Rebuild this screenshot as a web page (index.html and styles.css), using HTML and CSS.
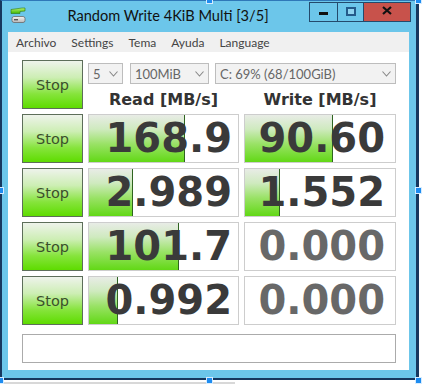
FILE: index.html
```html
<!DOCTYPE html>
<html lang="es">
<head>
    <meta charset="UTF-8">
    <title>Random Write 4KiB Multi [3/5]</title>
    <link rel="stylesheet" href="styles.css">
</head>
<body>
    <div class="window">
        <div class="titlebar">
            <svg class="app-icon" width="17" height="17" viewBox="0 0 17 17">
                <defs>
                    <linearGradient id="gtop" x1="0" y1="0" x2="0" y2="1">
                        <stop offset="0" stop-color="#b8f070"/>
                        <stop offset="1" stop-color="#3cb800"/>
                    </linearGradient>
                    <linearGradient id="gdisk" x1="0" y1="0" x2="0" y2="1">
                        <stop offset="0" stop-color="#f4f4f4"/>
                        <stop offset="1" stop-color="#b8b8b8"/>
                    </linearGradient>
                </defs>
                <path d="M1 2.5 L12 1 L15 1 L15 4 L10 4.5 L10 6.5 L1 6.5 Z" fill="url(#gtop)" stroke="#2d7a10" stroke-width="0.6"/>
                <rect x="2" y="9.5" width="13" height="6" rx="2" fill="url(#gdisk)" stroke="#6a6a6a" stroke-width="0.8"/>
                <rect x="4" y="12" width="4" height="1.4" fill="#555"/>
            </svg>
            <div class="title">Random Write 4KiB Multi [3/5]</div>
            <div class="caption-buttons">
                <div class="cap cap-min"><span class="dash"></span></div>
                <div class="cap cap-max"><span class="box"></span></div>
                <div class="cap cap-close">
                    <svg width="10" height="9" viewBox="0 0 10 9">
                        <path d="M1 1 L9 8 M9 1 L1 8" stroke="#111" stroke-width="2.2"/>
                    </svg>
                </div>
            </div>
        </div>

        <div class="client">
            <div class="menubar">
                <span>Archivo</span>
                <span>Settings</span>
                <span>Tema</span>
                <span>Ayuda</span>
                <span>Language</span>
            </div>

            <div class="content">
                <div class="grid">
                    <div class="stop">Stop</div>
                    <div class="controls">
                        <div class="combos">
                            <div class="combo combo-count">5<svg class="chev" width="9" height="6" viewBox="0 0 9 6"><path d="M0.5 0.5 L4.5 5 L8.5 0.5" fill="none" stroke="#888" stroke-width="1.1"/></svg></div>
                            <div class="combo combo-size">100MiB<svg class="chev" width="9" height="6" viewBox="0 0 9 6"><path d="M0.5 0.5 L4.5 5 L8.5 0.5" fill="none" stroke="#888" stroke-width="1.1"/></svg></div>
                            <div class="combo combo-drive">C: 69% (68/100GiB)<svg class="chev" width="9" height="6" viewBox="0 0 9 6"><path d="M0.5 0.5 L4.5 5 L8.5 0.5" fill="none" stroke="#888" stroke-width="1.1"/></svg></div>
                        </div>
                        <div class="headers">
                            <div>Read [MB/s]</div>
                            <div>Write [MB/s]</div>
                        </div>
                    </div>

                    <div class="stop">Stop</div>
                    <div class="value read"><div class="bar" style="width:95px"></div><span>168.9</span></div>
                    <div class="value write"><div class="bar" style="width:87px"></div><span>90.60</span></div>

                    <div class="stop">Stop</div>
                    <div class="value read"><div class="bar" style="width:43px"></div><span>2.989</span></div>
                    <div class="value write"><div class="bar" style="width:34px"></div><span>1.552</span></div>

                    <div class="stop">Stop</div>
                    <div class="value read"><div class="bar" style="width:89px"></div><span>101.7</span></div>
                    <div class="value write zero"><span>0.000</span></div>

                    <div class="stop">Stop</div>
                    <div class="value read"><div class="bar" style="width:28px"></div><span>0.992</span></div>
                    <div class="value write zero"><span>0.000</span></div>
                </div>
                <div class="status"></div>
            </div>
        </div>
    </div>
    <div class="below"></div>

    <div class="handle h-top-mid"></div>
    <div class="handle h-top-right"></div>
    <div class="handle h-mid-left"></div>
    <div class="handle h-mid-right"></div>
    <div class="handle h-bot-left"></div>
    <div class="handle h-bot-mid"></div>
    <div class="handle h-bot-right"></div>
</body>
</html>
```

FILE: styles.css
```css
body {
    margin: 0;
    width: 422px;
    height: 384px;
    overflow: hidden;
    position: relative;
    background: #fff;
    font-family: "Noto Sans", "Open Sans", sans-serif;
}
.window {
    width: 414px;
    height: 377px;
    background: #6cc6ea;
    border-top: 1px solid #2f78b8;
    border-left: 2px solid #17375e;
    border-right: 3px solid #17375e;
    border-bottom: 2px solid #17375e;
    display: flex;
    flex-direction: column;
}
.titlebar {
    height: 31px;
    display: flex;
    align-items: flex-start;
}
.app-icon {
    margin: 6px 0 0 8px;
}
.title {
    flex: 1;
    text-align: center;
    font-family: Lato, "Noto Sans", sans-serif;
    font-size: 14.6px;
    line-height: 30px;
    color: #111;
}
.caption-buttons {
    display: flex;
    margin: 1px 5px 0 0;
}
.cap {
    height: 18px;
    border: 1px solid #244a6c;
    display: flex;
    align-items: center;
    justify-content: center;
}
.cap-min {
    width: 27px;
}
.cap-max {
    width: 25px;
    border-left: none;
}
.cap-close {
    width: 46px;
    border-left: none;
    background: #c8524b;
}
.dash {
    width: 9px;
    height: 3px;
    background: #111;
    margin-top: 3px;
}
.box {
    width: 6px;
    height: 5px;
    border: 2px solid #245a8a;
    background: #8fd3ef;
    margin-top: -2px;
}
.cap-close svg {
    margin-top: -3px;
}
.client {
    margin: 0 7px 0 6px;
    height: 338px;
    display: flex;
    flex-direction: column;
}
.menubar {
    height: 20px;
    background: #f0f0f0;
    display: flex;
    align-items: center;
    gap: 15px;
    padding-left: 8px;
    font-family: Lato, "Noto Sans", sans-serif;
    font-size: 12px;
    color: #444;
}
.content {
    flex: 1;
    background: #fff;
    padding: 8px 0 0 14px;
}
.grid {
    display: grid;
    grid-template-columns: 61px 151px 152px;
    grid-auto-rows: 49px;
    gap: 5px;
}
.stop {
    box-sizing: border-box;
    border: 1px solid #5d6e5a;
    background: linear-gradient(#eef3eb 0%, #cdeeb4 35%, #86e43c 70%, #5edc00 100%);
    display: flex;
    align-items: center;
    justify-content: center;
    font-family: "DejaVu Sans", sans-serif;
    font-size: 14.5px;
    color: #3b4f2c;
}
.controls {
    grid-column: 2 / 4;
    padding-top: 3px;
}
.combos {
    display: flex;
    gap: 6px;
    height: 21px;
}
.combo {
    box-sizing: border-box;
    border: 1px solid #bdbdbd;
    background: #f2f2f2;
    display: flex;
    align-items: center;
    justify-content: space-between;
    padding: 0 4px 0 4px;
    font-family: Lato, "Noto Sans", sans-serif;
    font-size: 13px;
    color: #666;
}
.combo-count {
    width: 35px;
}
.combo-size {
    width: 79px;
    margin-left: 1px;
}
.combo-drive {
    width: 181px;
}
.headers {
    display: grid;
    grid-template-columns: 151px 152px;
    gap: 5px;
    margin-top: 6px;
    font-family: "DejaVu Sans", sans-serif;
    font-weight: bold;
    font-size: 16px;
    line-height: 20px;
    color: #333;
    text-align: center;
}
.value {
    box-sizing: border-box;
    position: relative;
    border: 1px solid #cdcdcd;
    background: #fff;
    overflow: hidden;
}
.bar {
    position: absolute;
    left: 0;
    top: 0;
    bottom: 0;
    border-right: 1px solid #2f6420;
    background: linear-gradient(#e8ece6 0%, #cfeabf 30%, #99e265 62%, #62d816 100%);
}
.value span {
    position: relative;
    display: block;
    text-align: right;
    font-family: "DejaVu Sans", sans-serif;
    font-weight: bold;
    font-size: 40px;
    line-height: 47px;
    color: #3a3a3a;
}
.read span {
    padding-right: 6px;
}
.write span {
    padding-right: 10px;
}
.zero span {
    color: #686868;
}
.status {
    box-sizing: border-box;
    width: 374px;
    height: 29px;
    margin-top: 9px;
    border: 1px solid #ababab;
    background: #fff;
}
.below {
    margin-top: 2px;
    width: 235px;
    height: 2px;
    background: #d8d8d8;
}
.handle {
    position: absolute;
    width: 5px;
    height: 5px;
    background: #1e8cf0;
    border: 1px solid #d6ecff;
}
.h-top-mid { left: 206px; top: -3px; }
.h-top-right { left: 415px; top: -3px; }
.h-mid-left { left: -3px; top: 187px; }
.h-mid-right { left: 415px; top: 187px; }
.h-bot-left { left: -3px; top: 377px; }
.h-bot-mid { left: 206px; top: 377px; }
.h-bot-right { left: 415px; top: 377px; }
```
